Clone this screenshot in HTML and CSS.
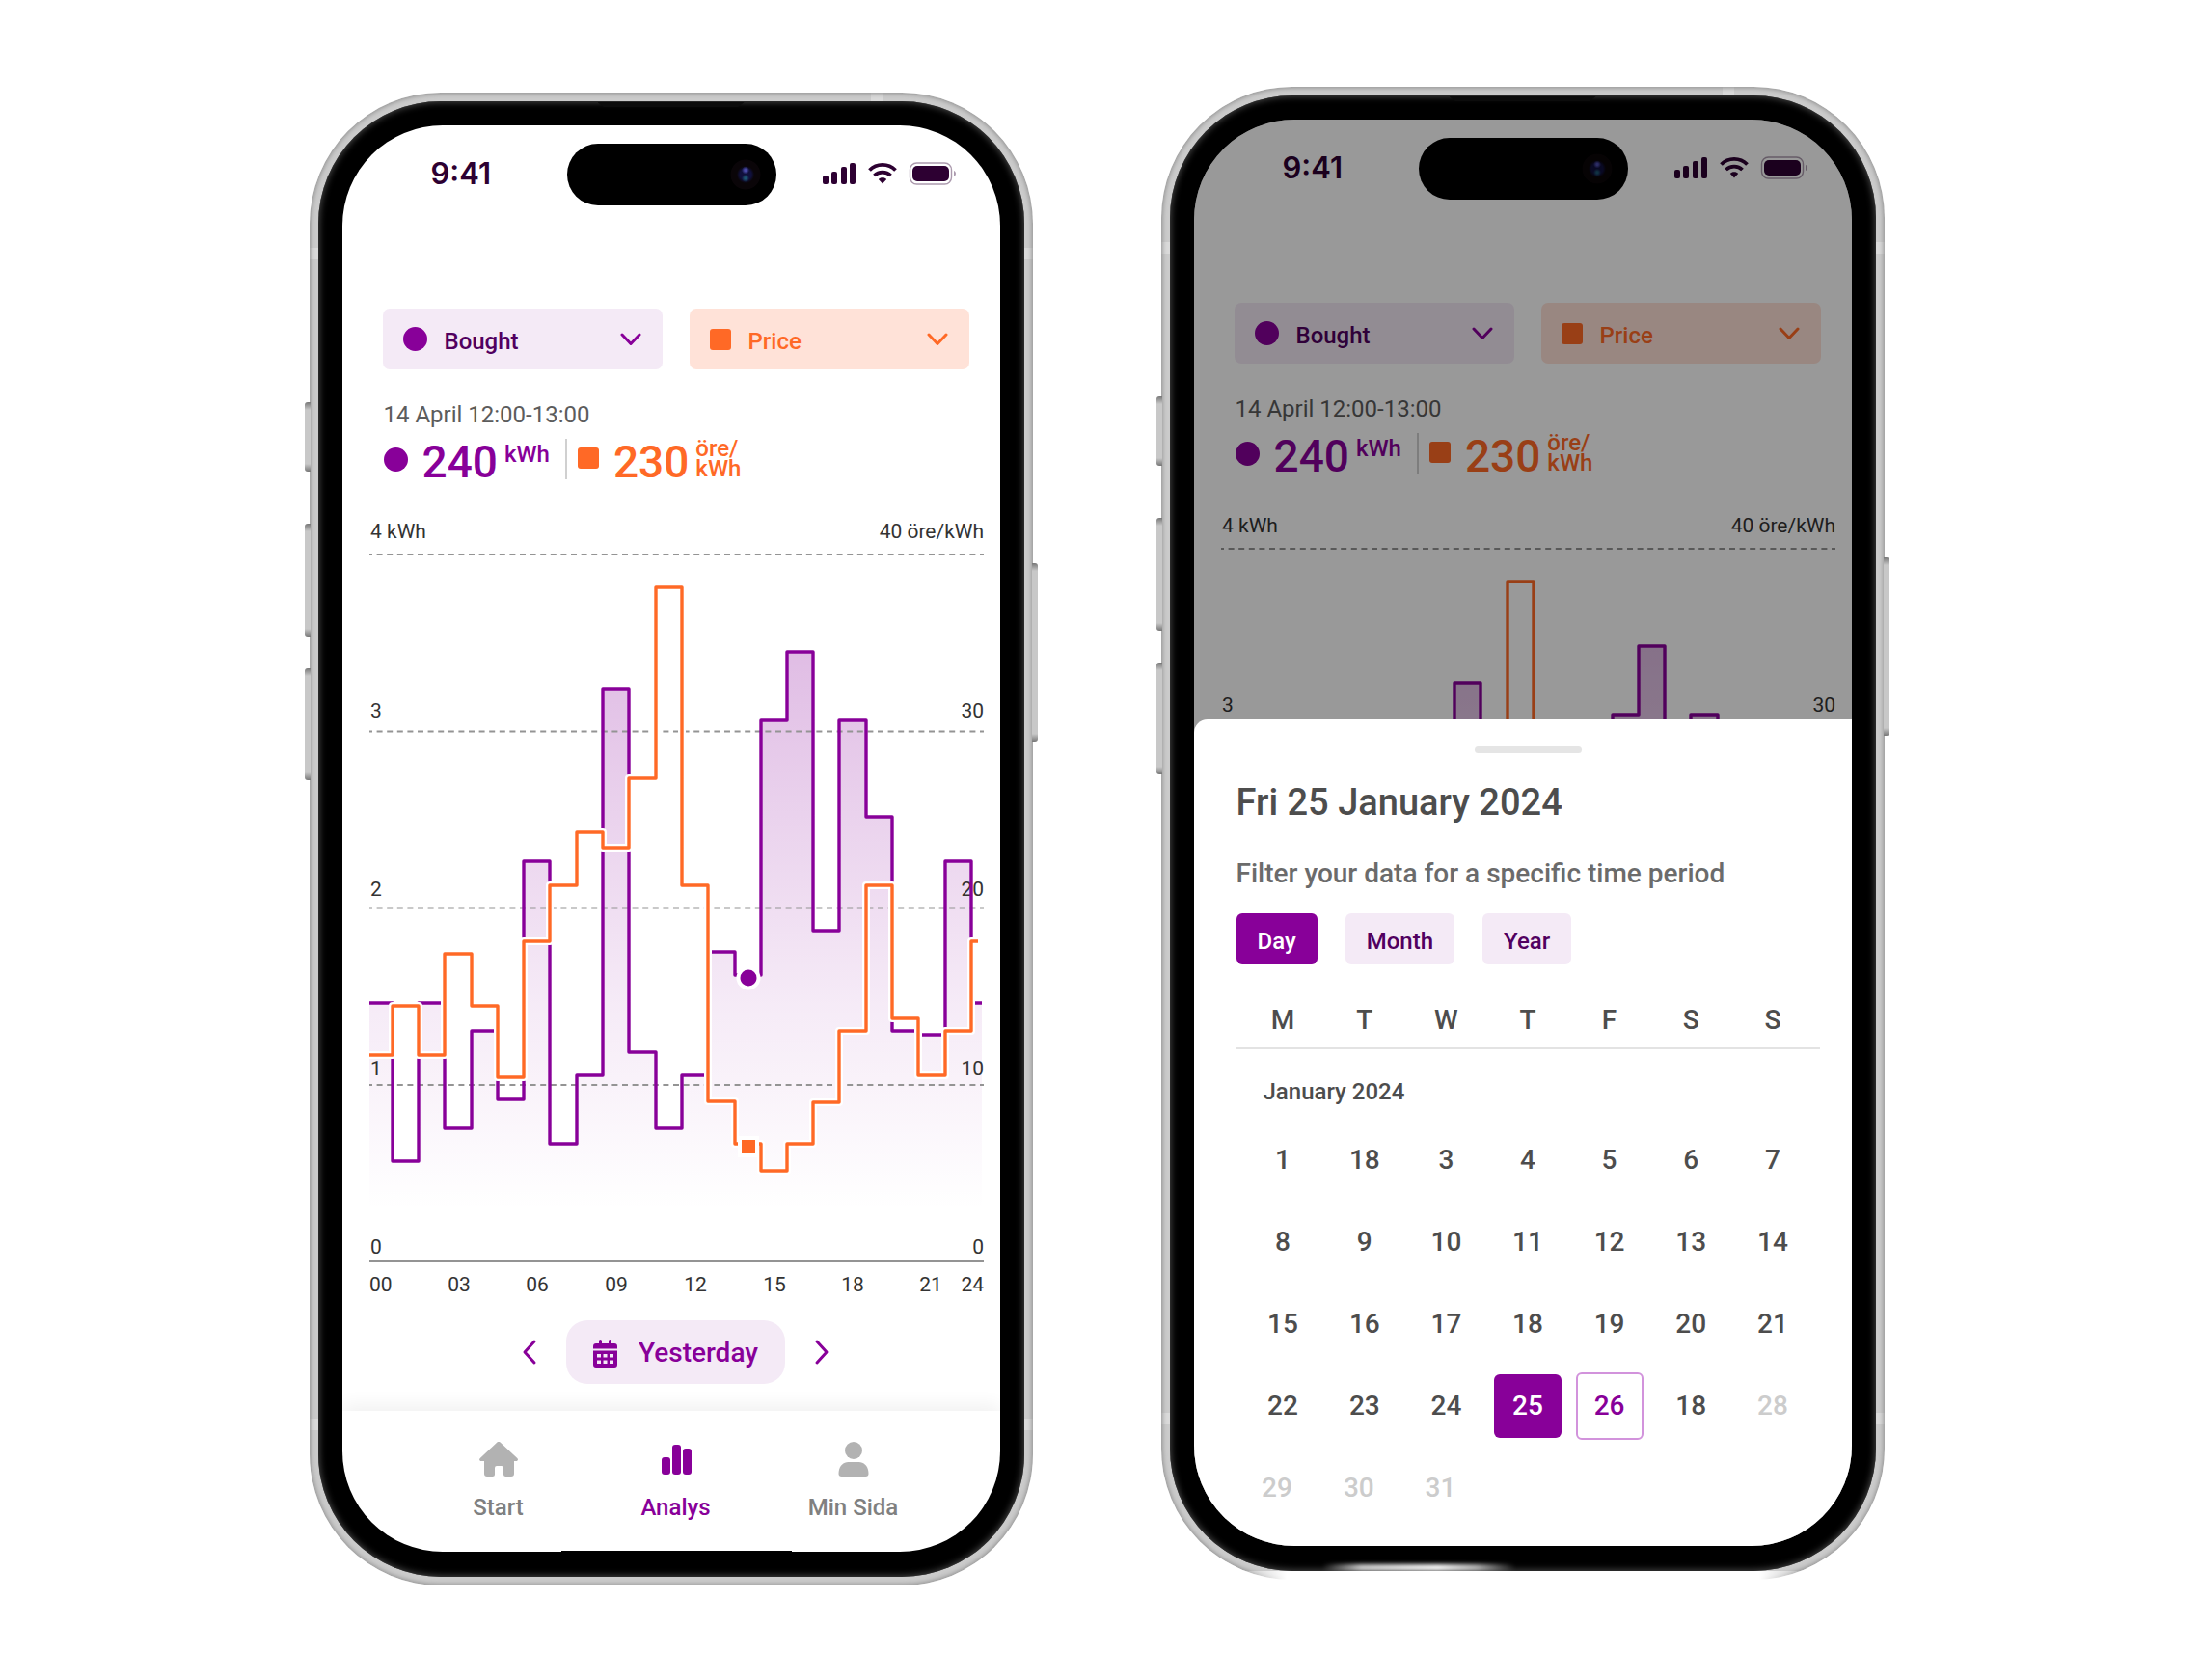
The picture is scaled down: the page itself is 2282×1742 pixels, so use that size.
FILE: index.html
```html
<!DOCTYPE html>
<html lang="en">
<head>
<meta charset="utf-8">
<meta name="viewport" content="width=device-width, initial-scale=1">
<title>Energy analysis</title>
<link rel="stylesheet" href="styles.css">
</head>
<body>
<svg class="defs" aria-hidden="true">
  <defs>
    <symbol id="chevron" viewBox="0 0 22 14"><path d="M2 2 L11 11.500 L20 2" fill="none" stroke="currentColor" stroke-width="3" stroke-linecap="round" stroke-linejoin="round"/></symbol>
    <symbol id="status" viewBox="0 0 138 24">
      <g fill="#2d0032">
        <rect x="0" y="14" width="6" height="9" rx="2"/>
        <rect x="9" y="10" width="6" height="13" rx="2"/>
        <rect x="19" y="5" width="6" height="18" rx="2"/>
        <rect x="28" y="1" width="6" height="22" rx="2"/>
        <path d="M62 16.200c1.900 0 3.200.7 4.200 1.700L62 22.600l-4.200-4.700c1-1 2.300-1.700 4.200-1.700z"/>
        <rect x="93" y="4" width="38" height="16" rx="5"/>
      </g>
      <g fill="none" stroke="#2d0032" stroke-width="3.800">
        <path d="M48.500 8.500C56 1 68 1 75.500 8.500"/>
        <path d="M53.500 14C58 9.500 66 9.500 70.500 14"/>
      </g>
      <rect x="90.500" y="1" width="43" height="22" rx="7" fill="none" stroke="#2d0032" stroke-opacity=".4" stroke-width="1.400"/>
      <path d="M136 9v6c2.600-1.200 2.600-4.800 0-6z" fill="#2d0032" fill-opacity=".4"/>
    </symbol>
    <linearGradient id="fade" gradientUnits="userSpaceOnUse" x1="0" y1="676" x2="0" y2="1255">
      <stop offset="0" stop-color="#880099" stop-opacity=".26"/>
      <stop offset=".63" stop-color="#880099" stop-opacity=".08"/>
      <stop offset="1" stop-color="#880099" stop-opacity="0"/>
    </linearGradient>
  </defs>
</svg>

<main class="showcase">
  <section class="phone phone-low" aria-label="Analysis">
    <i class="key key-a"></i><i class="key key-b"></i><i class="key key-c"></i><i class="key key-d"></i>
    <div class="bezel">
      <i class="speaker"></i>
      <div class="screen">
        <div class="view">
          <header class="status">
            <span class="time">9:41</span>
            <span class="island"><i class="camera"></i></span>
            <svg class="status-icons" aria-hidden="true"><use href="#status"/></svg>
          </header>
          <div class="pickers">
            <label class="picker bought"><i class="dot"></i><select aria-label="Energy series"><option>Bought</option></select><svg class="chevron" aria-hidden="true"><use href="#chevron"/></svg></label>
            <label class="picker price"><i class="square"></i><select aria-label="Price series"><option>Price</option></select><svg class="chevron" aria-hidden="true"><use href="#chevron"/></svg></label>
          </div>
          <div class="reading">
            <p class="period">14 April 12:00-13:00</p>
            <div class="values">
              <span class="value purple"><i class="dot"></i><b>240</b><small class="unit unit-single">kWh</small></span>
              <span class="value orange"><i class="square"></i><b>230</b><small class="unit">öre/<br>kWh</small></span>
            </div>
          </div>
          <svg class="chart" viewBox="383 530 637 815" role="img" aria-label="Bought energy and price per hour">
            <path fill="url(#fade)" d="M383 1040H407V1204H434V1040H461V1170H489V1069H516V1140H543V893H570V1186H598V1115H625V714H652V1091H680V1170H707V1115H734V987H762V1011H789V747H816V676H843V965H870V747H898V847H925V1069H952V1073H980V893H1007V1040H1018V1308H383Z"/>
            <g class="grid">
              <path d="M383 575H1020M383 758.500H1020M383 941.500H1020M383 1125H1020"/>
              <path class="base" d="M383 1308H1020"/>
            </g>
            <g class="labels">
              <text x="384" y="558">4 kWh</text><text x="384" y="744">3</text><text x="384" y="929">2</text><text x="384" y="1115">1</text><text x="384" y="1300">0</text>
              <g text-anchor="end"><text x="1020" y="558">40 öre/kWh</text><text x="1020" y="744">30</text><text x="1020" y="929">20</text><text x="1020" y="1115">10</text><text x="1020" y="1300">0</text><text x="1020" y="1339">24</text></g>
              <text x="383" y="1339">00</text>
              <g text-anchor="middle"><text x="476" y="1339">03</text><text x="557" y="1339">06</text><text x="639" y="1339">09</text><text x="721" y="1339">12</text><text x="803" y="1339">15</text><text x="884" y="1339">18</text><text x="965" y="1339">21</text></g>
            </g>
            <path class="line purple-line" d="M383 1040H407V1204H434V1040H461V1170H489V1069H516V1140H543V893H570V1186H598V1115H625V714H652V1091H680V1170H707V1115H734V987H762V1011H789V747H816V676H843V965H870V747H898V847H925V1069H952V1073H980V893H1007V1040H1018"/>
            <path class="halo" d="M383 1094H407V1043H434V1094H461V989H489V1043H516V1117H543V976H570V918H598V863H625V879H652V807H680V609H707V918H734V1142H762V1186H789V1214H816V1186H843V1143H870V1069H898V918H925V1056H952V1115H980V1069H1007V976H1014"/>
            <path class="line orange-line" d="M383 1094H407V1043H434V1094H461V989H489V1043H516V1117H543V976H570V918H598V863H625V879H652V807H680V609H707V918H734V1142H762V1186H789V1214H816V1186H843V1143H870V1069H898V918H925V1056H952V1115H980V1069H1007V976H1014"/>
            <circle cx="776" cy="1014" r="10.500" fill="#880099" stroke="#fff" stroke-width="4"/>
            <rect x="767" y="1180" width="18" height="18" fill="#ff6926" stroke="#fff" stroke-width="4"/>
          </svg>
          <div class="stepper">
            <button class="step" aria-label="Previous day"><svg viewBox="0 0 16 28"><path d="M13 3 3 14l10 11"/></svg></button>
            <button class="day-pill">
              <svg viewBox="0 0 25 29" aria-hidden="true"><path fill="currentColor" fill-rule="evenodd" d="M6 1.500a1.500 1.500 0 0 1 3 0V4h7V1.500a1.500 1.500 0 0 1 3 0V4h3a3 3 0 0 1 3 3v2.500H0V7a3 3 0 0 1 3-3h3zM0 11.500h25V26a3 3 0 0 1-3 3H3a3 3 0 0 1-3-3zM4 15v3.500h4V15zm6.500 0v3.500h4V15zm6.500 0v3.500h4V15zM4 21.500V25h4v-3.500zm6.500 0V25h4v-3.500zm6.500 0V25h4v-3.500z"/></svg>
              Yesterday
            </button>
            <button class="step" aria-label="Next day"><svg viewBox="0 0 16 28"><path d="M3 3l10 11L3 25"/></svg></button>
          </div>
          <nav class="tabs">
            <a href="#start"><svg viewBox="0 0 40 36" aria-hidden="true"><path fill="currentColor" d="M20 0c1 0 1.500.4 2.100 1L39.300 17c1.400 1.400.5 3-1.200 3H36v13a3 3 0 0 1-3 3h-5.500a2.500 2.500 0 0 1-2.500-2.500V27a2 2 0 0 0-2-2h-5a2 2 0 0 0-2 2v6.500a2.500 2.500 0 0 1-2.500 2.500H8a3 3 0 0 1-3-3V20H2C.2 20-.6 18.400.8 17L17.900 1c.6-.6 1.100-1 2.100-1z"/></svg>Start</a>
            <a href="#analys" class="active" aria-current="page"><svg viewBox="0 0 40 36" aria-hidden="true"><g fill="currentColor"><rect x="5" y="16" width="9" height="18" rx="3"/><rect x="16" y="3" width="9" height="31" rx="3"/><rect x="27" y="7" width="9" height="27" rx="3"/></g></svg>Analys</a>
            <a href="#min-sida"><svg viewBox="0 0 40 36" aria-hidden="true"><g fill="currentColor"><circle cx="20" cy="9" r="9"/><path d="M4.500 33c0-7.500 4.500-12 10-12h11c5.500 0 10 4.500 10 12a3 3 0 0 1-3 3h-25a3 3 0 0 1-3-3z"/></g></svg>Min Sida</a>
          </nav>
          <i class="home-bar"></i>
        </div>
      </div>
    </div>
  </section>

  <section class="phone phone-cut" aria-label="Date filter">
    <i class="key key-a"></i><i class="key key-b"></i><i class="key key-c"></i><i class="key key-d"></i>
    <div class="bezel">
      <i class="speaker"></i>
      <div class="screen">
        <div class="view dimmed">
          <header class="status">
            <span class="time">9:41</span>
            <span class="island"><i class="camera"></i></span>
            <svg class="status-icons" aria-hidden="true"><use href="#status"/></svg>
          </header>
          <div class="pickers">
            <label class="picker bought"><i class="dot"></i><select aria-label="Energy series"><option>Bought</option></select><svg class="chevron" aria-hidden="true"><use href="#chevron"/></svg></label>
            <label class="picker price"><i class="square"></i><select aria-label="Price series"><option>Price</option></select><svg class="chevron" aria-hidden="true"><use href="#chevron"/></svg></label>
          </div>
          <div class="reading">
            <p class="period">14 April 12:00-13:00</p>
            <div class="values">
              <span class="value purple"><i class="dot"></i><b>240</b><small class="unit unit-single">kWh</small></span>
              <span class="value orange"><i class="square"></i><b>230</b><small class="unit">öre/<br>kWh</small></span>
            </div>
          </div>
          <svg class="chart" viewBox="383 530 637 240" role="img" aria-label="Bought energy and price per hour">
            <path fill="url(#fade)" d="M625 770V714H652V770ZM789 770V747H816V676H843V770ZM870 770V747H898V770Z"/>
            <path class="grid" d="M383 575H1020"/>
            <g class="labels">
              <text x="384" y="558">4 kWh</text><text x="384" y="744">3</text>
              <g text-anchor="end"><text x="1020" y="558">40 öre/kWh</text><text x="1020" y="744">30</text></g>
            </g>
            <path class="line purple-line" d="M625 780V714H652V780M789 780V747H816V676H843V780M870 780V747H898V780"/>
            <path class="line orange-line" d="M680 780V609H707V780"/>
          </svg>
        </div>
        <section class="sheet">
          <i class="handle"></i>
          <h2>Fri 25 January 2024</h2>
          <p class="hint">Filter your data for a specific time period</p>
          <div class="chips">
            <button class="chip selected">Day</button>
            <button class="chip">Month</button>
            <button class="chip">Year</button>
          </div>
          <table class="calendar">
            <thead><tr><th>M</th><th>T</th><th>W</th><th>T</th><th>F</th><th>S</th><th>S</th></tr></thead>
            <tbody>
              <tr class="month"><td colspan="7">January 2024</td></tr>
              <tr><td><button>1</button></td><td><button>18</button></td><td><button>3</button></td><td><button>4</button></td><td><button>5</button></td><td><button>6</button></td><td><button>7</button></td></tr>
              <tr><td><button>8</button></td><td><button>9</button></td><td><button>10</button></td><td><button>11</button></td><td><button>12</button></td><td><button>13</button></td><td><button>14</button></td></tr>
              <tr><td><button>15</button></td><td><button>16</button></td><td><button>17</button></td><td><button>18</button></td><td><button>19</button></td><td><button>20</button></td><td><button>21</button></td></tr>
              <tr><td><button>22</button></td><td><button>23</button></td><td><button>24</button></td><td><button class="picked">25</button></td><td><button class="today">26</button></td><td><button>18</button></td><td><button disabled>28</button></td></tr>
              <tr class="last"><td><button disabled>29</button></td><td><button disabled>30</button></td><td><button disabled>31</button></td><td></td><td></td><td></td><td></td></tr>
            </tbody>
          </table>
        </section>
      </div>
    </div>
  </section>
</main>
</body>
</html>
```
FILE: styles.css
```css
:root {
  --purple: #880099;
  --deep: #510060;
  --lilac: #f4eaf6;
  --orange: #ff6926;
  --peach: #ffe2d8;
  --ink: #4d4d4d;
}

* { box-sizing: border-box; }

body {
  margin: 0;
  background: #fff;
  color: var(--ink);
  font-family: Roboto, "Liberation Sans", sans-serif;
  font-size: 24px;
  font-weight: 500;
  line-height: 28px;
}

h2, p { margin: 0; font-weight: 500; }
i { font-style: normal; }

button, select {
  margin: 0;
  padding: 0;
  border: 0;
  background: none;
  color: inherit;
  font: inherit;
}

a { color: inherit; text-decoration: none; }
svg { display: block; }
.defs { position: absolute; width: 0; height: 0; }

.showcase {
  display: flex;
  justify-content: center;
  align-items: flex-start;
  gap: 133px;
  padding: 90px 8px 90px 0;
}

/* Device frame */
.phone {
  position: relative;
  flex: 0 1 750px;
  padding: 9px;
  border-radius: 136px;
  background:
    linear-gradient(#dadada, #dadada) 0 161px / 100% 12px no-repeat,
    linear-gradient(#dadada, #dadada) 0 1375px / 100% 12px no-repeat,
    linear-gradient(#dadada, #dadada) 582px 0 / 12px 12px no-repeat,
    #cbcbcb;
  box-shadow: inset 0 0 5px 1px #8c8c8c;
}
.phone-low { margin-top: 6px; }

.bezel {
  position: relative;
  padding: 25px 25px 26px;
  border-radius: 127px;
  background: #000;
  box-shadow: inset 0 0 7px 1px #4a4a4a;
}

.speaker {
  position: absolute;
  top: 1px;
  left: 50%;
  width: 152px;
  height: 5px;
  margin-left: -76px;
  background: #0c0c0c;
  clip-path: polygon(0 0, 100% 0, 146px 100%, 6px 100%);
}

.key {
  position: absolute;
  left: -5px;
  width: 6px;
  border-radius: 3px 0 0 3px;
  background: linear-gradient(#777, #c8c8c8 8px, #c8c8c8 calc(100% - 8px), #777);
}
.key-a { top: 321px; height: 72px; }
.key-b { top: 447px; height: 117px; }
.key-c { top: 597px; height: 116px; }
.key-d { top: 488px; left: auto; right: -5px; height: 185px; border-radius: 0 3px 3px 0; }

/* The lower rim of the second device dissolves into the page */
.phone-cut::before {
  content: "";
  position: absolute;
  left: 80px;
  right: 80px;
  bottom: -1px;
  height: 10px;
  background: linear-gradient(90deg, transparent, #fff 50px, #fff calc(100% - 50px), transparent);
}
.phone-cut .bezel::after {
  content: "";
  position: absolute;
  left: 158px;
  bottom: 0;
  width: 200px;
  height: 7px;
  background: linear-gradient(90deg, transparent, rgba(255, 255, 255, .8) 40px, #fff 120px, rgba(255, 255, 255, .7) 160px, transparent);
  filter: blur(2px);
}

.screen {
  display: grid;
  overflow: hidden;
  border-radius: 104px;
  background: #fff;
}
.view, .sheet { grid-area: 1 / 1; min-width: 0; }
.view { position: relative; }
.dimmed::after {
  content: "";
  position: absolute;
  inset: 0;
  background: rgba(0, 0, 0, .4);
}

/* Status bar */
.status {
  display: grid;
  grid-template-columns: 233fr 217fr 232fr;
  align-items: center;
  padding-top: 19px;
}
.time {
  padding: 0 0 2px 92px;
  color: #2d0032;
  font: 600 31px/36px Inter, sans-serif;
}
.island {
  display: flex;
  align-items: center;
  justify-content: flex-end;
  height: 64px;
  padding-right: 16px;
  border-radius: 32px;
  background: #000;
}
.camera {
  width: 32px;
  height: 32px;
  border-radius: 50%;
  background: radial-gradient(circle at 50% 36%, #4a4aa8 0 1px, transparent 4px), radial-gradient(circle at 50% 62%, #1c5470 0 1px, transparent 4px), radial-gradient(circle, #10103c 0 6px, #0a0508 9px 15px, #000 16px);
}
.status-icons { width: 138px; height: 24px; margin: 0 0 2px 48px; }

/* Series pickers */
.pickers {
  display: grid;
  grid-template-columns: 1fr 1fr;
  gap: 28px;
  margin-top: 107px;
  padding: 0 32px 0 42px;
}
.picker {
  display: flex;
  align-items: center;
  gap: 18px;
  height: 63px;
  padding: 0 22px 0 21px;
  border-radius: 7px;
}
.picker select {
  flex: 1;
  min-width: 0;
  padding-top: 4px;
  appearance: none;
  line-height: 28px;
}
.bought { background: var(--lilac); color: var(--deep); }
.bought .chevron, .bought .dot { color: var(--purple); }
.price { background: var(--peach); color: var(--orange); }
.chevron { width: 22px; height: 14px; }

.dot { flex: none; width: 25px; height: 25px; border-radius: 50%; background: currentColor; }
.square { flex: none; width: 22px; height: 22px; border-radius: 3px; background: currentColor; }

/* Current reading */
.reading { margin-top: 33px; padding: 0 32px 0 43px; }
.period { color: #5c5c5c; font-weight: 400; }
.values { display: flex; height: 42px; margin-top: 11px; }
.value { display: flex; gap: 7px; }
.value .dot, .value .square { margin: 9px 8px 0 0; }
.value b { font-size: 46px; font-weight: 500; line-height: 48px; }
.unit { font-size: 24px; line-height: 21px; }
.unit-single { line-height: 32px; }
.purple { padding-right: 16px; color: var(--purple); }
.orange { padding-left: 11px; border-left: 2px solid #d0d0d0; color: var(--orange); }

/* Chart */
.chart {
  width: calc(100% - 45px);
  height: auto;
  margin: 33px 17px 0 28px;
}
.grid { fill: none; stroke: #949494; stroke-width: 2; stroke-dasharray: 6 4.600; stroke-dashoffset: 3; }
.base { stroke-dasharray: none; }
.labels { fill: #333; font-size: 21px; font-weight: 400; }
.line { fill: none; stroke-width: 3.400; stroke-linejoin: round; }
.purple-line { stroke: var(--purple); }
.orange-line { stroke: var(--orange); }
.halo { fill: none; stroke: #fff; stroke-width: 8; stroke-linejoin: round; }

/* Day stepper */
.stepper {
  display: flex;
  align-items: center;
  justify-content: center;
  gap: 28px;
  margin-top: 24px;
  padding: 0 32px 0 42px;
  color: var(--purple);
}
.step svg { width: 20px; height: 28px; fill: none; stroke: currentColor; stroke-width: 3; stroke-linecap: round; stroke-linejoin: round; }
.day-pill {
  display: flex;
  align-items: center;
  gap: 22px;
  height: 66px;
  padding: 2px 28px 0;
  border-radius: 22px;
  background: var(--lilac);
  font-size: 28px;
}
.day-pill svg { width: 25px; height: 29px; }

/* Tab bar */
.tabs {
  display: grid;
  grid-template-columns: repeat(3, 184px);
  justify-content: center;
  margin-top: 28px;
  padding: 32px 32px 32px 42px;
  box-shadow: 0 -6px 18px rgba(0, 0, 0, .06);
  color: #808080;
}
.tabs a { display: flex; flex-direction: column; align-items: center; gap: 18px; }
.tabs svg { width: 40px; height: 36px; color: #b2b2b2; }
.tabs .active, .tabs .active svg { color: var(--purple); }
.home-bar {
  position: absolute;
  bottom: 0;
  left: 50%;
  width: 239px;
  height: 1px;
  margin-left: -114px;
  background: #000;
}

/* Date sheet */
.sheet {
  position: relative;
  margin-top: 622px;
  padding: 28px 33px 18px 44px;
  border-radius: 14px 0 0 0;
  background: #fff;
}
.handle {
  display: block;
  width: 111px;
  height: 7px;
  margin: 0 auto;
  border-radius: 4px;
  background: #e5e5e5;
}
.sheet h2 { margin-top: 29px; font-size: 38px; line-height: 44px; }
.hint { margin-top: 36px; color: #6b6b6b; font-size: 28px; line-height: 32px; }
.chips { display: flex; gap: 29px; margin-top: 25px; }
.chip {
  height: 53px;
  padding: 4px 22px 0;
  border-radius: 6px;
  background: var(--lilac);
  color: var(--deep);
}
.selected { background: var(--purple); color: #fff; }

.calendar {
  width: 100%;
  table-layout: fixed;
  border-collapse: separate;
  border-spacing: 0;
  font-size: 28px;
  line-height: 32px;
  text-align: center;
}
.calendar th { padding: 42px 0 12px; border-bottom: 2px solid #e3e3e3; font-weight: 500; }
.calendar td { height: 85px; padding: 0; }
.calendar th:first-child { width: 91px; }
.calendar th:last-child { width: 91px; }
.calendar tr > :first-child { padding-left: 6px; }
.calendar tr > :last-child { padding-right: 6px; }
.calendar .month td { height: 72px; padding: 30px 0 14px 28px; font-size: 24px; line-height: 28px; text-align: left; }
.calendar button { display: block; width: 70px; height: 66px; margin: 0 auto; border-radius: 6px; }
.calendar button:disabled { color: #ccc; }
.calendar .picked { background: var(--purple); color: #fff; }
.calendar .today { height: 70px; border: 2px solid #d293dc; color: var(--purple); }
.calendar .last td { padding-right: 12px; }
.calendar .last td:first-child { padding-right: 6px; padding-left: 0; }
```
